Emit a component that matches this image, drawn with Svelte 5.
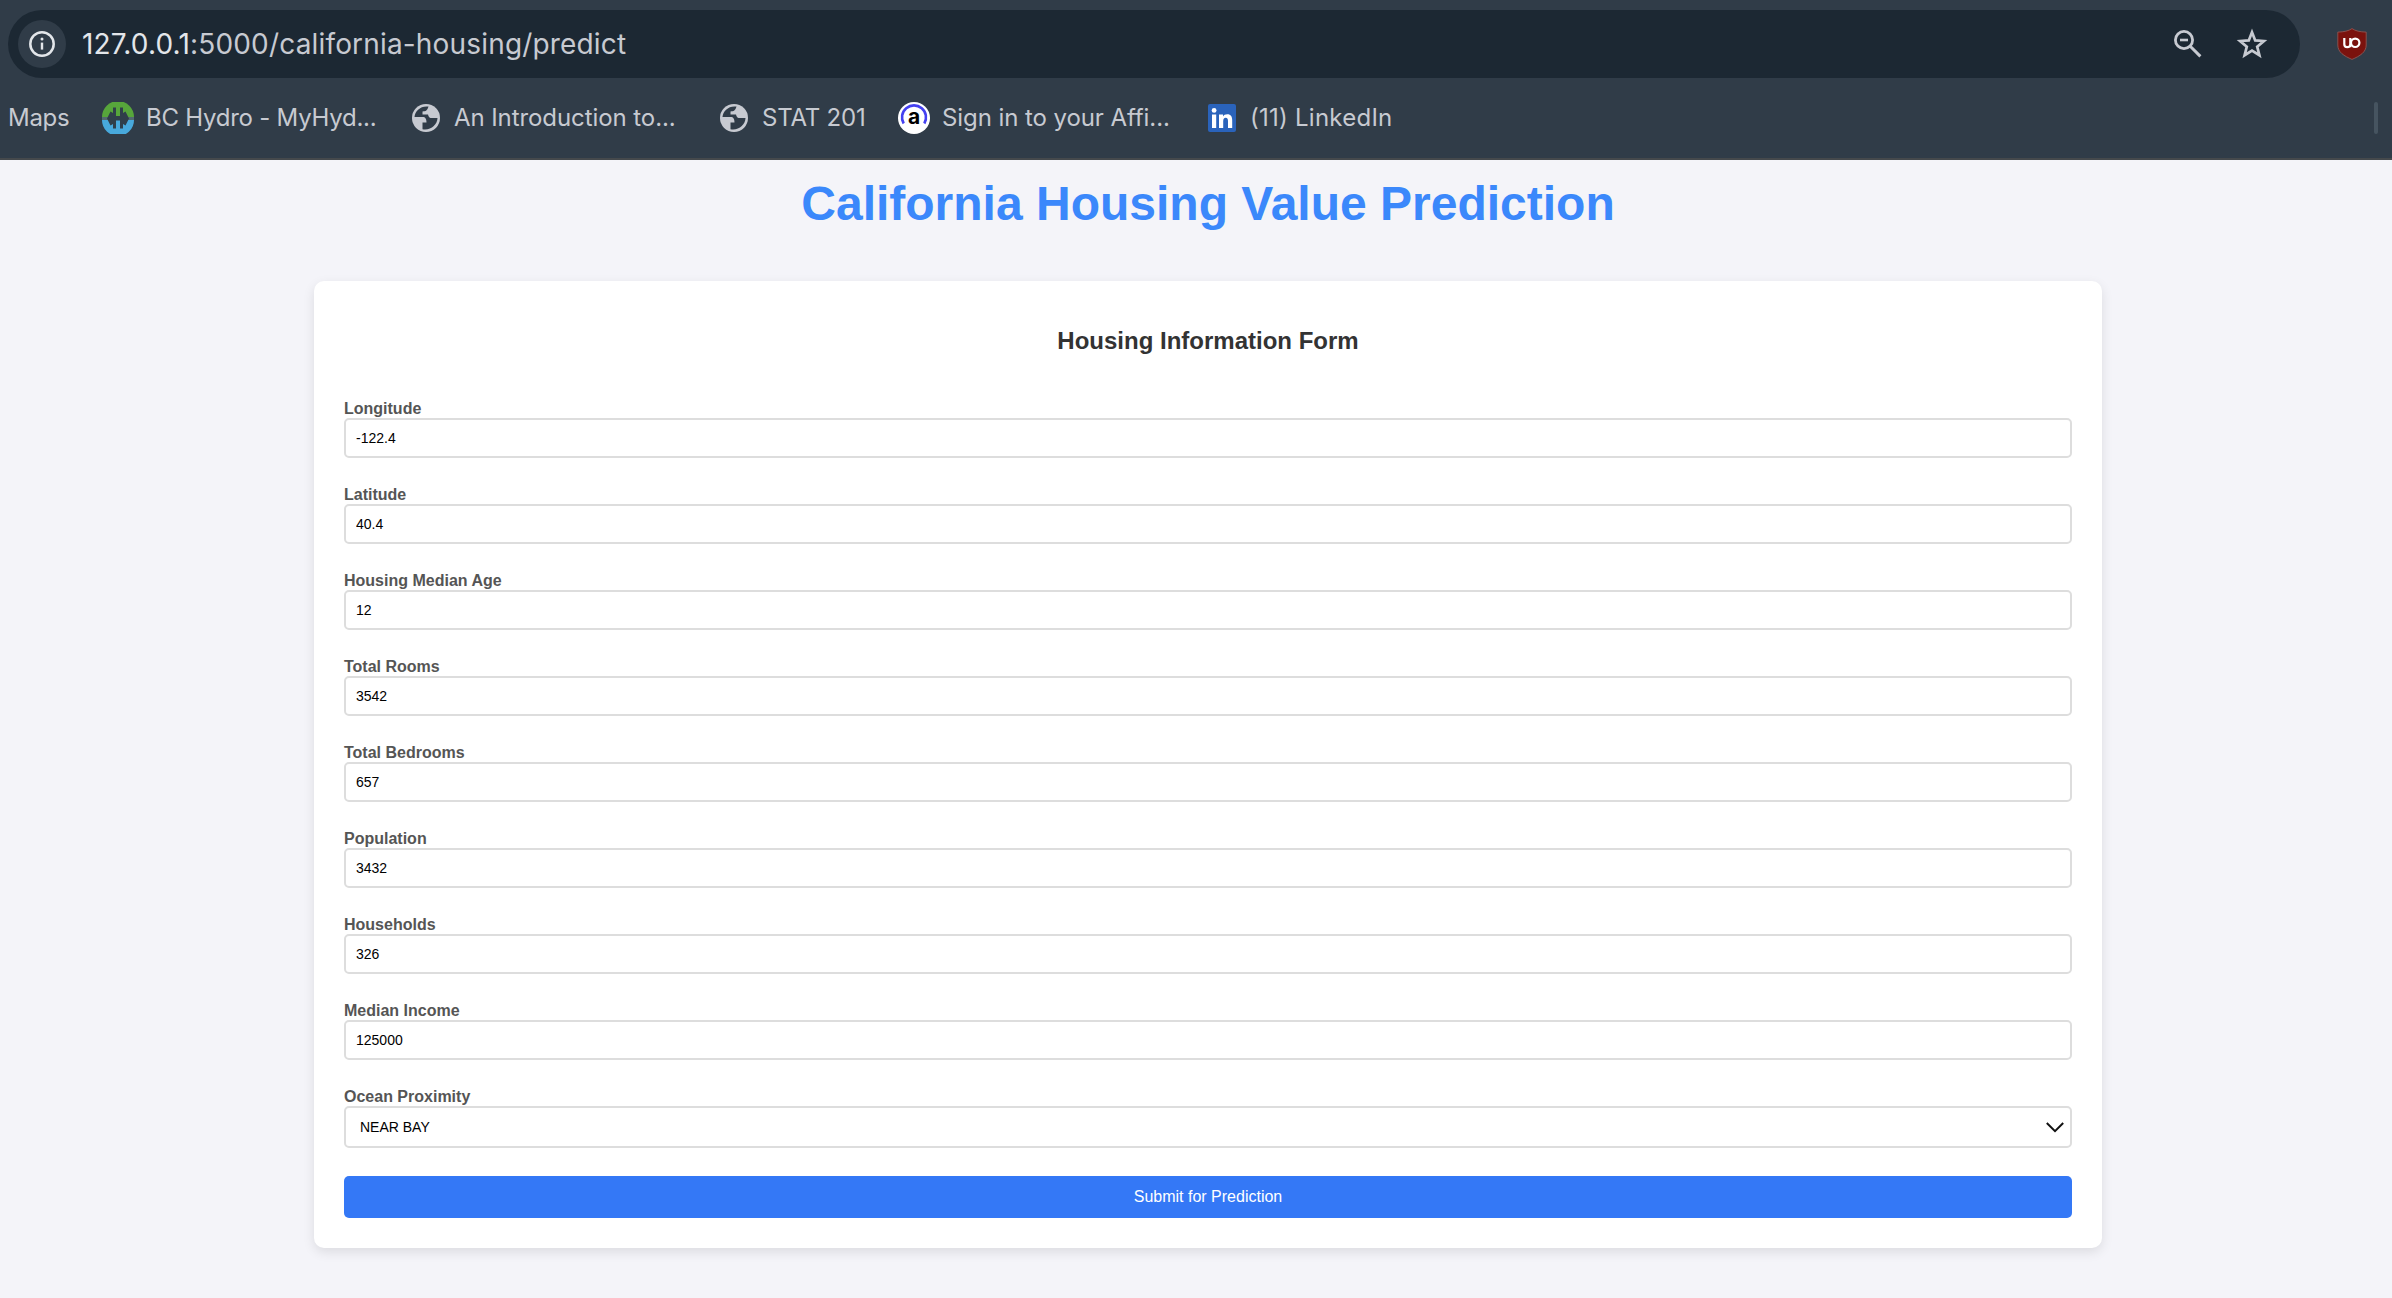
<script>
  const bookmarks = [
    { icon: 'hydro', label: 'BC Hydro - MyHyd...', tracking: -0.24 },
    { icon: 'globe', label: 'An Introduction to...', tracking: -0.08 },
    { icon: 'globe', label: 'STAT 201', tracking: -0.2 },
    { icon: 'affinity', label: 'Sign in to your Affi...', tracking: -0.08 },
    { icon: 'linkedin', label: '(11) LinkedIn', tracking: 0.25 }
  ];

  const fields = [
    { id: 'longitude', label: 'Longitude', value: '-122.4' },
    { id: 'latitude', label: 'Latitude', value: '40.4' },
    { id: 'age', label: 'Housing Median Age', value: '12' },
    { id: 'rooms', label: 'Total Rooms', value: '3542' },
    { id: 'bedrooms', label: 'Total Bedrooms', value: '657' },
    { id: 'population', label: 'Population', value: '3432' },
    { id: 'households', label: 'Households', value: '326' },
    { id: 'income', label: 'Median Income', value: '125000' }
  ];
</script>

<header class="browser">
  <div class="toolbar">
    <div class="omnibox">
      <span class="site-info">
        <svg width="28" height="28" viewBox="0 0 28 28" fill="none">
          <circle cx="14" cy="14" r="11.7" stroke="#e3e6ea" stroke-width="2.5" />
          <path d="M14 12.6v7" stroke="#e3e6ea" stroke-width="2.4" />
          <circle cx="14" cy="8.9" r="1.5" fill="#e3e6ea" />
        </svg>
      </span>
      <span class="url"><b>127.0.0.1</b>:5000/california-housing/predict</span>
      <svg class="zoom" width="28" height="28" viewBox="0 0 28 28" fill="none" stroke="#c7cad1">
        <circle cx="10" cy="10" r="8.6" stroke-width="2.8" />
        <path d="M16.2 16.2 26.4 26.4" stroke-width="3" />
        <path d="M6 10h8" stroke-width="2.6" />
      </svg>
      <svg class="star" width="32" height="32" viewBox="0 0 32 32" fill="none" stroke="#c7cad1" stroke-width="2.7">
        <path d="M16 4.2 19.2 12.4 27.9 13 21.2 18.7 23.4 27.2 16 22.6 8.6 27.2 10.8 18.7 4.1 13 12.8 12.4Z" />
      </svg>
    </div>
    <svg class="shield" width="30" height="32" viewBox="0 0 30 32" fill="none">
      <path d="M15 .6C11.5 3 7 3.9 .8 4.1V17c0 7.2 6.2 11 14.2 14.4C23 28 29.2 24.200 29.200 17V4.100C23 3.900 18.500 3 15 .6Z" fill="#7b120d" stroke="#8c5754" stroke-width=".9" />
      <path d="M7.300 10v6.200q0 3 3 3t3-3V10M13.300 14.800v4.400" stroke="#fff" stroke-width="2.200" />
      <circle cx="18.200" cy="14.800" r="4.200" stroke="#fff" stroke-width="2.200" />
    </svg>
  </div>

  <nav class="bookmarks">
    <span class="bookmark maps"><span class="name">Maps</span></span>
    {#each bookmarks as { icon, label, tracking }}
      <span class="bookmark" style:letter-spacing="{tracking}px">
        <svg width="32" height="32" viewBox="0 0 32 32">
          {#if icon === 'hydro'}
            <path d="M0 15A16 16 0 0 1 32 15Z" fill="#57a63b" />
            <path d="M0 18A16 16 0 0 0 32 18Z" fill="#48a9dc" />
            <path d="M0 16.500h32" stroke="#526a70" stroke-width="3" />
            <path d="M5 16.500 8.500 9.500 11 11V5.500H14V14H18V5.500H21V11L23.500 9.500 27 16.500 23.500 23.500 21 22V26.500H18V18.500H14V26.500H11V22L8.500 23.500Z" fill="#303f4a" />
          {:else if icon === 'globe'}
            <circle cx="16" cy="16" r="14" fill="#c7cad1" />
            <path d="M18.500 4.600C10.500 3.600 5 9 4.500 15H12.500C15.500 15 16.500 17 16.500 20.500H12.500V27.200C20.500 28.700 27.300 23 27.500 16H21.500C18.800 16 18.500 14 18 12.500H12.500V9.500C15.800 9.500 17.300 8.600 18.500 4.600Z" fill="#303c48" />
          {:else if icon === 'affinity'}
            <circle cx="16" cy="16" r="16" fill="#fff" />
            <path d="M5.700 21.500A12 12 0 1 1 26.300 21.500" fill="none" stroke="#4440f0" stroke-width="2.600" />
            <text x="16" y="21.500" text-anchor="middle" class="glyph-a">a</text>
          {:else}
            <rect x="2" y="2" width="28" height="28" rx="2" fill="#2a63bb" />
            <path d="M6 12.500h4.200V26H6Z" fill="#fff" />
            <circle cx="8.100" cy="8.400" r="2.400" fill="#fff" />
            <path d="M13 12.500h4v1.900c.8-1.400 2.200-2.200 4.200-2.200 3.800 0 5 2.400 5 6.200V26H22v-6.800c0-2-.5-3.400-2.300-3.400s-2.500 1.300-2.500 3.400V26H13Z" fill="#fff" />
          {/if}
        </svg>
        <span class="name">{label}</span>
      </span>
    {/each}
    <span class="divider"></span>
  </nav>
</header>

<main>
  <h1>California Housing Value Prediction</h1>
  <form class="card" onsubmit={(e) => e.preventDefault()}>
    <h2>Housing Information Form</h2>
    {#each fields as field}
      <div class="field">
        <label for={field.id}>{field.label}</label>
        <input id={field.id} type="text" value={field.value} />
      </div>
    {/each}
    <div class="field">
      <label for="ocean">Ocean Proximity</label>
      <div class="select">
        <select id="ocean">
          <option>NEAR BAY</option>
        </select>
        <svg width="18" height="11" viewBox="0 0 18 11" fill="none" stroke="#111" stroke-width="2">
          <path d="M.8 1 9 9.200 17.200 1" />
        </svg>
      </div>
    </div>
    <button type="submit">Submit for Prediction</button>
  </form>
</main>

<style>
  :global(body) {
    margin: 0;
    background: #f4f4f9;
    font-family: 'Liberation Sans', Arial, sans-serif;
  }

  .browser {
    box-sizing: border-box;
    height: 160px;
    padding-top: 10px;
    background: #303c48;
    border-bottom: 2px solid #45494c;
    font-family: Inter, sans-serif;
    color: #c7cad1;
  }

  .toolbar {
    display: flex;
    align-items: center;
    height: 68px;
    padding: 0 25px 0 8px;
  }

  .omnibox {
    box-sizing: border-box;
    display: flex;
    align-items: center;
    width: 2292px;
    height: 68px;
    padding: 0 32px 0 10px;
    border-radius: 34px;
    background: #1c2833;
  }

  .site-info {
    display: grid;
    place-items: center;
    width: 48px;
    height: 48px;
    margin-right: 16px;
    border-radius: 50%;
    background: #303c48;
  }

  .url {
    flex: 1;
    font-size: 28px;
    letter-spacing: 0.17px;
    white-space: nowrap;
  }

  .url b {
    font-weight: 400;
    color: #e3e6ea;
  }

  .star {
    margin-left: 34px;
  }

  .shield {
    margin-left: auto;
  }

  .bookmarks {
    display: grid;
    grid-template-columns: 94px 308px 308px 180px 308px 1fr 4px;
    align-items: center;
    height: 32px;
    margin-top: 24px;
    padding: 0 14px 0 8px;
    font-size: 24px;
  }

  .bookmark {
    display: flex;
    align-items: center;
    gap: 12px;
    white-space: nowrap;
  }

  .maps {
    letter-spacing: -0.3px;
  }

  .name {
    padding-bottom: 2px;
  }

  .glyph-a {
    font: 700 21px Inter, sans-serif;
    fill: #000;
  }

  .divider {
    width: 4px;
    height: 32px;
    border-radius: 2px;
    background: #465460;
  }

  main {
    padding-top: 16px;
  }

  h1 {
    margin: 0 0 50px;
    padding-left: 24px;
    font-size: 48px;
    line-height: 55px;
    text-align: center;
    color: #3b88fb;
  }

  .card {
    box-sizing: border-box;
    width: 1788px;
    height: 967px;
    margin: 0 0 50px 314px;
    padding: 46px 30px 30px;
    border-radius: 10px;
    background: #fff;
    box-shadow: 0 4px 12px rgba(0, 0, 0, 0.1);
  }

  h2 {
    margin: 0 0 46px;
    font-size: 24px;
    line-height: 27px;
    text-align: center;
    color: #333;
  }

  .field {
    margin-bottom: 28px;
  }

  label {
    display: block;
    font-size: 16px;
    font-weight: 700;
    line-height: 18px;
    color: #555;
  }

  input,
  select {
    display: block;
    box-sizing: border-box;
    width: 100%;
    height: 40px;
    margin: 0;
    padding: 0 10px;
    border: 2px solid #ddd;
    border-radius: 5px;
    background: #fff;
    font: 14px 'Liberation Sans', Arial, sans-serif;
    color: #000;
  }

  .select {
    position: relative;
  }

  select {
    height: 42px;
    padding-left: 14px;
    appearance: none;
  }

  .select svg {
    position: absolute;
    top: 16px;
    right: 8px;
  }

  button {
    display: block;
    width: 100%;
    height: 42px;
    padding: 0;
    border: 0;
    border-radius: 5px;
    background: #3478f6;
    font: 16px 'Liberation Sans', Arial, sans-serif;
    color: #fff;
  }
</style>
